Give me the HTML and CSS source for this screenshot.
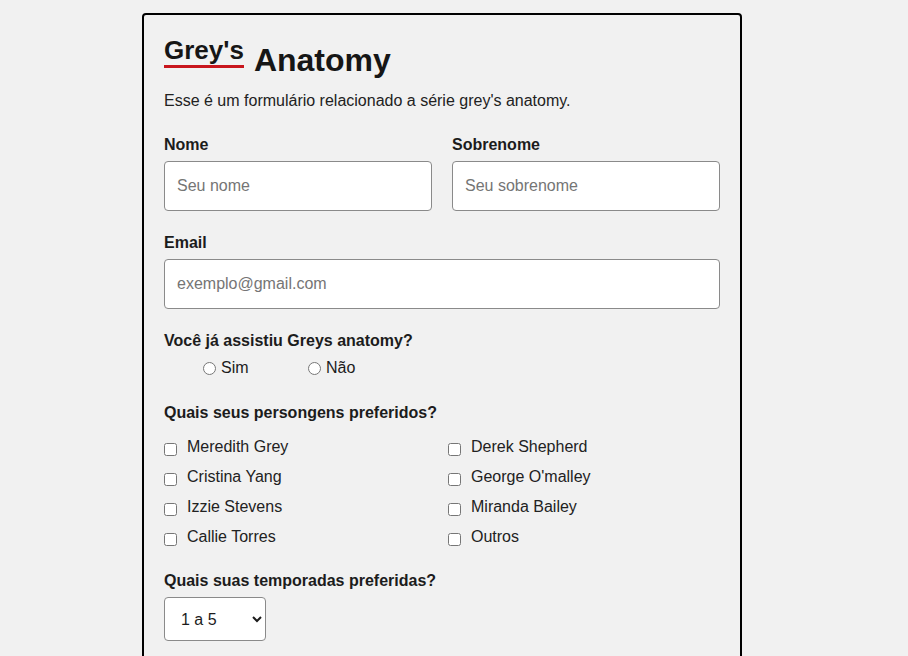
FILE: index.html
```html
<!DOCTYPE html>
<html lang="pt-BR">
<head>
<meta charset="utf-8">
<title>Grey's Anatomy</title>
<link rel="stylesheet" href="styles.css">
</head>
<body>
<main class="card">
  <h1 class="title"><span class="title-grey">Grey's</span><span class="title-anatomy">Anatomy</span></h1>
  <p class="intro">Esse é um formulário relacionado a série grey's anatomy.</p>

  <div class="row">
    <div class="field">
      <label class="label" for="nome">Nome</label>
      <input class="input" id="nome" type="text" placeholder="Seu nome">
    </div>
    <div class="field">
      <label class="label" for="sobrenome">Sobrenome</label>
      <input class="input" id="sobrenome" type="text" placeholder="Seu sobrenome">
    </div>
  </div>

  <div class="field">
    <label class="label" for="email">Email</label>
    <input class="input" id="email" type="email" placeholder="exemplo@gmail.com">
  </div>

  <div class="group group-radio">
    <div class="label">Você já assistiu Greys anatomy?</div>
    <div class="radios">
      <label class="radio-option"><input class="radio" type="radio" name="assistiu">Sim</label>
      <label class="radio-option"><input class="radio" type="radio" name="assistiu">Não</label>
    </div>
  </div>

  <div class="group group-check">
    <div class="label">Quais seus persongens preferidos?</div>
    <div class="checks">
      <label class="check-option"><input class="check" type="checkbox">Meredith Grey</label>
      <label class="check-option"><input class="check" type="checkbox">Derek Shepherd</label>
      <label class="check-option"><input class="check" type="checkbox">Cristina Yang</label>
      <label class="check-option"><input class="check" type="checkbox">George O'malley</label>
      <label class="check-option"><input class="check" type="checkbox">Izzie Stevens</label>
      <label class="check-option"><input class="check" type="checkbox">Miranda Bailey</label>
      <label class="check-option"><input class="check" type="checkbox">Callie Torres</label>
      <label class="check-option"><input class="check" type="checkbox">Outros</label>
    </div>
  </div>

  <div class="group group-select">
    <label class="label" for="temporadas">Quais suas temporadas preferidas?</label>
    <select class="select" id="temporadas">
      <option>1 a 5</option>
      <option>6 a 10</option>
      <option>11 a 15</option>
      <option>16 a 19</option>
    </select>
  </div>
</main>
</body>
</html>
```

FILE: styles.css
```css
html, body {
  margin: 0;
  padding: 0;
}

body {
  background: #f1f1f1;
  font-family: "Liberation Sans", Arial, sans-serif;
  font-size: 16px;
  color: #1c1c1c;
}

.card {
  box-sizing: border-box;
  width: 600px;
  margin: 13px 0 0 142px;
  padding: 20px 20px 40px;
  border: 2px solid #000;
  border-radius: 4px;
  background: #f1f1f1;
}

.title {
  display: flex;
  align-items: flex-start;
  gap: 10px;
  margin: 0;
  font-weight: bold;
  color: #161616;
}

.title-grey {
  font-size: 26px;
  line-height: 30px;
  border-bottom: 3px solid #c8161d;
}

.title-anatomy {
  font-size: 32px;
  line-height: 36px;
  margin-top: 7px;
}

.intro {
  margin: 14px 0 0;
  line-height: 18px;
  color: #222;
}

.row {
  display: grid;
  grid-template-columns: 1fr 1fr;
  gap: 20px;
  margin-top: 26px;
}

.row + .field {
  margin-top: 23px;
}

.field {
  display: flex;
  flex-direction: column;
}

.label {
  display: block;
  font-weight: bold;
  line-height: 18px;
  color: #1c1c1c;
}

.input {
  box-sizing: border-box;
  height: 50px;
  margin-top: 7px;
  padding: 0 12px;
  border: 1px solid #8a8a8a;
  border-radius: 4px;
  background: #fff;
  font-family: "Liberation Sans", Arial, sans-serif;
  font-size: 16px;
  color: #1c1c1c;
}

.input::placeholder {
  color: #757575;
}

.group-radio {
  margin-top: 23px;
}

.radios {
  display: grid;
  grid-template-columns: 105px 105px;
  margin-top: 9px;
  padding-left: 39px;
  line-height: 18px;
}

.radio-option {
  display: flex;
  align-items: center;
}

.radio {
  width: 13px;
  height: 13px;
  margin: 1px 5px 0 0;
}

.group-check {
  margin-top: 27px;
}

.checks {
  display: grid;
  grid-template-columns: 284px 1fr;
  margin-top: 10px;
}

.check-option {
  box-sizing: border-box;
  display: flex;
  align-items: flex-start;
  height: 30px;
  padding-top: 6px;
  line-height: 18px;
  color: #222;
}

.check {
  flex: none;
  width: 13px;
  height: 13px;
  margin: 5px 10px 0 0;
}

.group-select {
  margin-top: 20px;
}

.select {
  display: block;
  box-sizing: border-box;
  width: 102px;
  height: 44px;
  margin-top: 7px;
  padding: 0 6px 0 12px;
  border: 1px solid #8a8a8a;
  border-radius: 4px;
  background: #fff;
  font-family: "Liberation Sans", Arial, sans-serif;
  font-size: 16px;
  color: #1c1c1c;
}
```
